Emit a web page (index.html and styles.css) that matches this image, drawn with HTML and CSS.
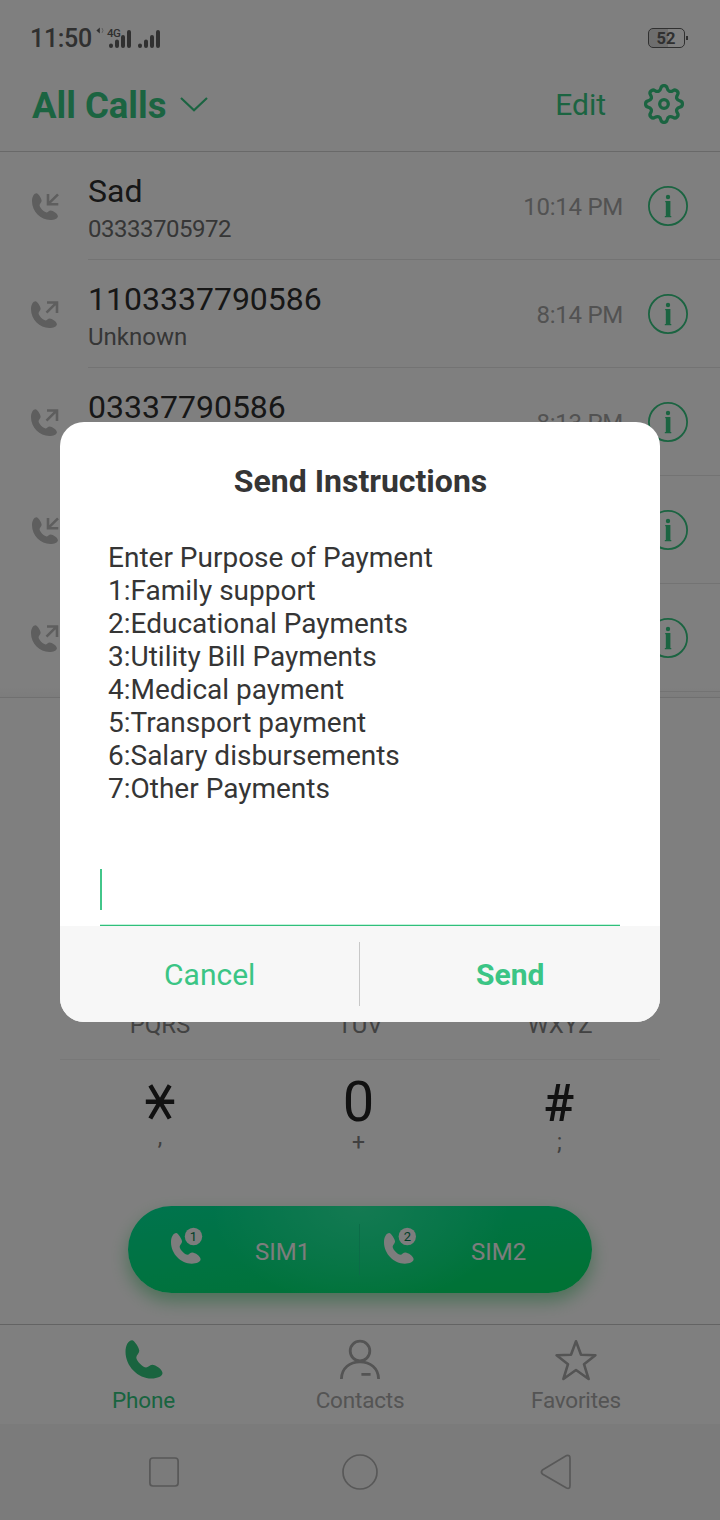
FILE: index.html
```html
<!DOCTYPE html>
<html lang="en">
<head>
<meta charset="utf-8">
<title>All Calls</title>
<link rel="stylesheet" href="styles.css">
</head>
<body>
<svg class="defs" width="0" height="0" aria-hidden="true">
  <defs>
    <path id="handset" d="M6.5 0C9 0 13.8 8 13.8 10.6C13.8 13 10.8 15 10.8 17.2C10.8 20.5 17.5 27.3 20.6 27.3C22.6 27.3 24 24.5 26.8 24.5C30 24.5 37 29.2 37 32.8C37 36 32 38.3 26 38.3C12.5 38.3 0 26 0 11.5C0 5 3 0 6.5 0Z"/>
    <g id="incoming"><use href="#handset" transform="translate(2 1.3) scale(.7)"/><path d="M28 2.3L18.6 11.7M18 2V12.2H28.3" fill="none" stroke="currentColor" stroke-width="2.6"/></g>
    <g id="outgoing"><use href="#handset" transform="translate(1 1.3) scale(.7)"/><path d="M16.5 12.7L26.3 2.9M17 2.5H27V13" fill="none" stroke="currentColor" stroke-width="2.6"/></g>
    <g id="info"><circle cx="20" cy="20" r="19.1" fill="none" stroke="currentColor" stroke-width="1.8"/><circle cx="20" cy="11" r="2.2"/><path d="M17.2 15H22.4V30H23.3V31.2H16.8V30H17.8V16.2H17.2Z"/></g>
    <path id="gear-quarter" d="M0-18.42Q2.59-18.42 3.1-15.97Q3.62-13.52 5.31-12.82Q7-12.12 9.1-13.49Q11.19-14.85 13.02-13.02Q14.85-11.19 13.49-9.1Q12.12-7 12.82-5.31Q13.52-3.62 15.97-3.1Q18.42-2.59 18.42 0"/>
  </defs>
</svg>
<div class="screen">
  <div class="status">
    <span class="clock">11:50</span>
    <svg class="signals" width="66" height="24" viewBox="0 0 66 24">
      <path d="M3.8 .5V6.5L.4 3.5Z"/><path d="M6 1Q8 3.5 6 6" fill="none" stroke="currentColor" stroke-width=".8" opacity=".5"/>
      <text x="11" y="9.5" class="net">4G</text>
      <g stroke="currentColor" stroke-width="4" stroke-linecap="round">
        <path d="M15 18.6V19.1M21 14.6V19.1M27 10.1V19.1M33 5.1V19.1M44 18.6V19.1M50 14.6V19.1M56 10.1V19.1M62 5.1V19.1"/>
      </g>
    </svg>
    <div class="battery"><span class="level">52</span></div>
  </div>
  <header class="header">
    <h1 class="title">All Calls</h1>
    <svg class="chevron" width="30" height="18" viewBox="0 0 30 18"><path d="M2 3L15 15.2L28 3" fill="none" stroke="currentColor" stroke-width="2.2"/></svg>
    <span class="edit">Edit</span>
    <svg class="gear" width="40" height="40" viewBox="-20 -20 40 40" fill="none" stroke="currentColor" stroke-width="3.3">
      <use href="#gear-quarter"/><use href="#gear-quarter" transform="rotate(90)"/><use href="#gear-quarter" transform="rotate(180)"/><use href="#gear-quarter" transform="rotate(270)"/>
      <circle r="4.3"/>
    </svg>
  </header>
  <div class="calls">
    <div class="call"><svg class="kind" width="30" height="30"><use href="#incoming"/></svg><div class="entry"><div class="who"><div class="name">Sad</div><div class="sub number">03333705972</div></div><span class="time">10:14 PM</span><svg class="info" width="40" height="40"><use href="#info"/></svg></div></div>
    <div class="call"><svg class="kind" width="30" height="30"><use href="#outgoing"/></svg><div class="entry"><div class="who"><div class="name">1103337790586</div><div class="sub">Unknown</div></div><span class="time">8:14 PM</span><svg class="info" width="40" height="40"><use href="#info"/></svg></div></div>
    <div class="call"><svg class="kind" width="30" height="30"><use href="#outgoing"/></svg><div class="entry"><div class="who"><div class="name">03337790586</div></div><span class="time">8:13 PM</span><svg class="info" width="40" height="40"><use href="#info"/></svg></div></div>
    <div class="call"><svg class="kind" width="30" height="30"><use href="#incoming"/></svg><div class="entry"><div class="who"></div><svg class="info" width="40" height="40"><use href="#info"/></svg></div></div>
    <div class="call"><svg class="kind" width="30" height="30"><use href="#outgoing"/></svg><div class="entry"><div class="who"></div><svg class="info" width="40" height="40"><use href="#info"/></svg></div></div>
  </div>
  <div class="dialer">
    <div class="letters"><span>PQRS</span><span>TUV</span><span>WXYZ</span></div>
    <div class="keys">
      <div class="key"><svg class="star" width="30" height="36" viewBox="0 0 30 36"><path d="M.8 17.7H29.2M5.3 1.3L24.7 34.5M24.7 1.3L5.3 34.5" fill="none" stroke="currentColor" stroke-width="4.4"/></svg><span class="alt comma">,</span></div>
      <div class="key"><span class="digit">0</span><span class="alt">+</span></div>
      <div class="key"><span class="digit hash">#</span><span class="alt semicolon">;</span></div>
    </div>
    <div class="sims">
      <div class="sim"><svg width="36" height="40" viewBox="0 0 36 40"><use href="#handset" transform="translate(1 7) scale(.8)"/><circle cx="23.5" cy="10.5" r="8.7"/><text x="23.5" y="15" class="badge">1</text></svg><span>SIM1</span></div>
      <div class="sim second"><svg width="36" height="40" viewBox="0 0 36 40"><use href="#handset" transform="translate(1 7) scale(.8)"/><circle cx="24.3" cy="10.5" r="8.7"/><text x="24.3" y="15" class="badge">2</text></svg><span>SIM2</span></div>
    </div>
  </div>
  <nav class="tabs">
    <div class="tab active"><svg width="42" height="42" viewBox="0 0 42 42"><use href="#handset" x="2.5" y="1.2"/></svg><span>Phone</span></div>
    <div class="tab"><svg width="42" height="42" viewBox="0 0 42 42" fill="none" stroke="currentColor" stroke-width="2.8"><circle cx="21" cy="12" r="9.8"/><path d="M2.4 40C2.6 29 11 22.8 21 22.8S39.4 29 39.6 40M22.4 35.3H31.6"/></svg><span>Contacts</span></div>
    <div class="tab"><svg width="42" height="42" viewBox="0 0 42 42" fill="none" stroke="currentColor" stroke-width="2.6" stroke-linejoin="round"><path d="M21 2.3L26 15.8L40.4 16.2L29 25.2L33.6 40L21 31L8.4 40L13 25.2L1.6 16.2L16 15.8Z"/></svg><span>Favorites</span></div>
  </nav>
  <div class="system">
    <svg width="36" height="36" fill="none" stroke="currentColor" stroke-width="1.7"><rect x="3.9" y="4" width="28.2" height="28" rx="3"/></svg>
    <svg width="36" height="36" fill="none" stroke="currentColor" stroke-width="1.7"><circle cx="18" cy="18" r="17"/></svg>
    <svg width="36" height="36" fill="none" stroke="currentColor" stroke-width="1.7"><path d="M4.4 16L28.5 1.6Q32 .5 32 4.5V31.5Q32 35.5 28.5 34L4.4 20Q2.5 18 4.4 16Z"/></svg>
  </div>
</div>
<div class="scrim">
  <section class="dialog">
    <h2 class="dialog-title">Send Instructions</h2>
    <div class="message">Enter Purpose of Payment<br>1:Family support<br>2:Educational Payments<br>3:Utility Bill Payments<br>4:Medical payment<br>5:Transport payment<br>6:Salary disbursements<br>7:Other Payments</div>
    <div class="field"><div class="caret"></div></div>
    <footer class="actions"><div class="action">Cancel</div><div class="rule"></div><div class="action primary">Send</div></footer>
  </section>
</div>
</body>
</html>
```
FILE: styles.css
```css
* { box-sizing: border-box; }
body { margin: 0; font-family: Roboto, "Liberation Sans", sans-serif; background: #fff; }
svg { display: block; flex: none; fill: currentColor; }
svg[fill="none"] { fill: none; }
.defs { position: absolute; }
.screen { width: 720px; height: 1520px; display: flex; flex-direction: column; overflow: hidden; }

.status { height: 60px; padding: 16px 35px 0 30px; display: flex; align-items: center; color: #606060; }
.clock { font-size: 25px; font-weight: 500; line-height: 30px; width: 66px; white-space: nowrap; letter-spacing: -.3px; padding-top: 2px; }
.signals { margin-top: 2px; }
.net { font-size: 11.5px; font-weight: 500; letter-spacing: -.5px; }
.battery { margin-left: auto; width: 37px; height: 20px; border: 1.5px solid #606060; border-radius: 5px; display: flex; align-items: center; justify-content: center; background: linear-gradient(90deg, #dcdcdc 0 54%, transparent 54%); position: relative; }
.battery::after { content: ""; position: absolute; right: -4px; top: 7px; width: 2px; height: 4px; background: #606060; }
.level { font-size: 16.5px; font-weight: 700; line-height: 18px; padding: 1px 1px 0 0; }

.header { height: 92px; padding: 0 36px 0 32px; display: flex; align-items: center; color: #36c883; border-bottom: 1px solid #d2d2d2; }
.title { margin: 0; font-size: 36.5px; font-weight: 700; line-height: 42px; }
.chevron { margin: -3px 0 0 13px; }
.edit { margin-left: auto; margin-right: 38px; margin-top: -1px; font-size: 30px; line-height: 36px; }
.gear { margin-top: -4px; }

.calls { height: 546px; border-bottom: 1px solid #e0e0e0; background: linear-gradient(#fff 534px, #f8f8f8 546px); }
.call { height: 108px; display: flex; padding-left: 30px; color: #bcbcbc; }
.kind { margin-top: 40px; }
.entry { flex: 1; margin-left: 28px; padding-right: 32px; display: flex; align-items: flex-start; border-bottom: 1px solid #e6e6e6; }
.who { flex: 1; padding-top: 20px; }
.name { font-size: 32px; line-height: 38px; color: #2e2e2e; }
.sub { margin-top: 5px; font-size: 24px; line-height: 28px; color: #6c6c6c; }
.number { letter-spacing: -.5px; }
.time { padding-top: 41px; font-size: 24px; letter-spacing: -.25px; line-height: 28px; color: #a4a4a4; }
.info { margin: 34px 0 0 25px; color: #36c883; }

.dialer { height: 626px; display: flex; flex-direction: column; justify-content: flex-end; }
.letters { margin: 0 60px; height: 50px; border-bottom: 1px solid #f0f0f0; display: grid; grid-template-columns: repeat(3, 1fr); padding-top: 2px; text-align: center; font-size: 24px; line-height: 26px; color: #848484; }
.keys { margin: 0 60px; height: 146px; display: grid; grid-template-columns: repeat(3, 1fr); color: #222; }
.key { display: flex; flex-direction: column; align-items: center; }
.star { margin: 24px 0 8px; }
.digit { font-size: 56px; line-height: 46px; height: 50px; margin: 19px 3px 0 0; }
.hash { font-size: 51px; font-weight: 500; line-height: 49px; margin-right: 2px; }
.alt { font-size: 23px; line-height: 28px; color: #808080; margin-right: 3px; }
.comma { margin: -4px 0 0; }
.semicolon { margin: 0 1px 0 0; }
.sims { width: 464px; height: 87px; margin: 0 auto 31px; border-radius: 44px; display: flex; background: radial-gradient(ellipse 150px 100px at 50% 0, #28f4a4, #28f4a400), linear-gradient(172deg, #00e89c, #00e46a 90%); box-shadow: 0 8px 18px rgba(0, 180, 60, .42); color: #fafafa; }
.sim { width: 232px; padding: 20px 0 0 42px; display: flex; font-size: 24px; }
.sim span { margin-left: 49px; margin-top: 12px; line-height: 28px; }
.second { padding-left: 23px; position: relative; }
.second::before { content: ""; position: absolute; left: -1px; top: 18px; width: 1px; height: 51px; background: #18d890; }
.second span { margin-left: 52px; }
.badge { font-size: 13px; text-anchor: middle; fill: #007d50; }

.tabs { height: 100px; padding: 14px 36px 0; border-top: 1px solid #c6c6c6; display: grid; grid-template-columns: repeat(3, 1fr); color: #a8a8a8; }
.tab { display: flex; flex-direction: column; align-items: center; font-size: 22.5px; line-height: 26px; letter-spacing: -.2px; }
.tab span { margin-top: 6px; }
.active { color: #32c87e; }
.active span { margin-right: 1px; }
.system { height: 96px; padding: 0 66px; background: #f6f6f6; color: #b0b0b0; display: grid; grid-template-columns: repeat(3, 1fr); align-items: center; justify-items: center; }

.scrim { position: absolute; top: 0; left: 0; width: 720px; height: 1520px; background: rgba(0, 0, 0, .5); padding: 422px 60px 0; }
.dialog { height: 600px; border-radius: 24px; background: #fff; overflow: hidden; display: flex; flex-direction: column; }
.dialog-title { margin: 40px 0 0 1px; text-align: center; font-size: 32px; font-weight: 700; line-height: 38px; color: #353535; }
.message { margin: 41px 48px 0; font-size: 28px; line-height: 33px; color: #353535; }
.field { margin: 63px 40px 0; height: 58px; padding-top: 1px; border-bottom: 1px solid #30bf7b; box-shadow: inset 0 -1px #c4f2dc; }
.caret { width: 2px; height: 41px; background: #42c68a; }
.actions { margin-top: auto; height: 96px; background: #f7f7f7; display: flex; align-items: center; color: #3bc585; font-size: 30px; line-height: 36px; }
.action { flex: 1; text-align: center; padding-top: 2px; }
.primary { font-weight: 700; }
.rule { width: 1px; height: 64px; margin: 0 1px 0 -1px; background: #c8c8c8; }
```
